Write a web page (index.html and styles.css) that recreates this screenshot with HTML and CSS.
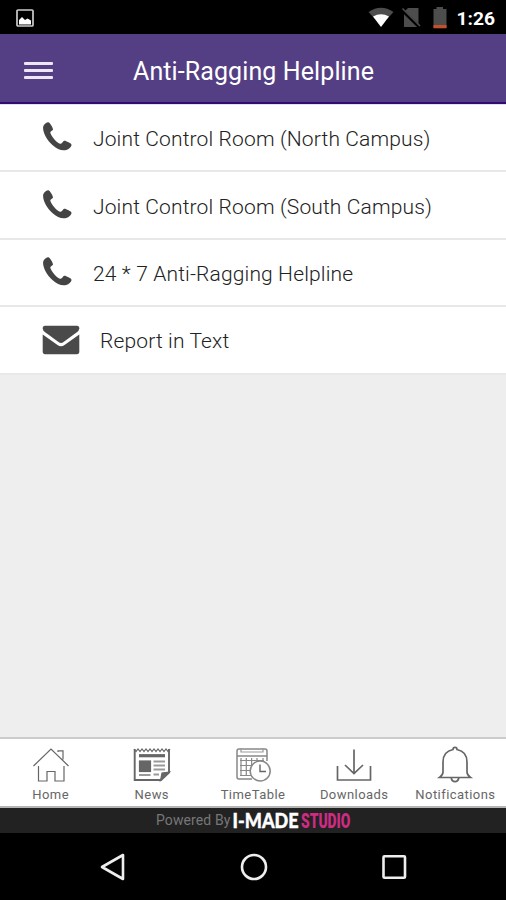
FILE: index.html
```
<!DOCTYPE html>
<html lang="en">
<head>
    <meta charset="UTF-8">
    <meta name="viewport" content="width=device-width, initial-scale=1.0">
    <title>Anti-Ragging Helpline</title>
    <link rel="stylesheet" href="styles.css">
</head>

<body>
    <svg class="sprite" width="0" height="0">
        <symbol id="phone" viewBox="0 0 30 30">
            <path d="M6.8 1.4C5.3.9 2 3 1.3 5.2C.1 10 4.1 18.500 10.400 24C15 28.200 20 30.100 24.200 29C27 28.200 29 26.400 29.500 24.300C29.700 23.200 28.500 22.300 26.500 21.300C24.500 20.300 23 19.500 22.100 19.800C21.100 20.200 20.300 22.200 19 22.700C17.500 23.200 14.800 21.200 12.500 18.500C10 15.500 7.900 12.300 8.400 11C8.800 10.100 10.700 9.700 11 8.500C11.300 7.100 8.100 1.900 6.800 1.400Z"/>
        </symbol>
    </svg>

    <div class="statusbar">
        <svg class="picture" width="18" height="18" viewBox="0 0 18 18">
            <rect x="1" y="1" width="16" height="16" rx="1" fill="none" stroke="#ccc" stroke-width="1.700"/>
            <path d="M3 15.500V11L6 8L9 11L11.500 9.500L15 11.500V15.500Z" fill="#fff"/>
        </svg>
        <div class="indicators">
            <svg width="138" height="34" viewBox="368 0 138 34">
                <path d="M368.500 12Q381 3.500 393.500 12L387.500 18.500H374.500Z" fill="#4d4d4d"/>
                <path d="M373 16.500Q381 12 389 16.500L381 27Z" fill="#fff"/>
                <path d="M408 8H418.500V27H404V12Z" fill="#4d4d4d"/>
                <path d="M402 10L420 27.500" stroke="#000" stroke-width="3.200"/>
                <path d="M402.500 8.500L420 26" stroke="#4d4d4d" stroke-width="1.600"/>
                <path d="M433.500 9H436.500V7H443V9H446.500V28H433.500Z" fill="#4d4d4d"/>
                <path d="M433.500 25H446.500V28.300H433.500Z" fill="#c44f2b"/>
                <text class="clock" x="456.500" y="25" textLength="38.500" lengthAdjust="spacingAndGlyphs">1:26</text>
            </svg>
        </div>
    </div>

    <div class="header">
        <div class="burger">
            <span></span>
            <span></span>
            <span></span>
        </div>
        <div class="title">Anti-Ragging Helpline</div>
    </div>

    <div class="list">
        <div class="row">
            <svg class="phone" width="30" height="30"><use href="#phone"/></svg>
            <span>Joint Control Room (North Campus)</span>
        </div>
        <div class="row">
            <svg class="phone" width="30" height="30"><use href="#phone"/></svg>
            <span>Joint Control Room (South Campus)</span>
        </div>
        <div class="row">
            <svg class="phone" width="30" height="30"><use href="#phone"/></svg>
            <span>24 * 7 Anti-Ragging Helpline</span>
        </div>
        <div class="row">
            <svg class="mail" width="38" height="30" viewBox="0 0 38 30">
                <path d="M3 .8H35Q37.300.8 37.300 3.500Q37.300 5.500 34.500 7.600L21.500 17Q19 18.800 16.500 17L3.500 7.600Q.7 5.500.7 3.500Q.7.8 3 .8Z"/>
                <path d="M.7 9.500L15.500 20Q19 22.500 22.500 20L37.300 9.500V26.500Q37.300 29.200 34.800 29.200H3.200Q.7 29.200.7 26.500Z"/>
            </svg>
            <span>Report in Text</span>
        </div>
    </div>

    <div class="tabs">
        <div class="tab">
            <svg width="40" height="40" viewBox="0 0 40 40">
                <path d="M2.500 22L20 5L37.500 22M27 8V6.800H32V15.500M7.500 22V37H16V27.500H24V37H33V22"/>
            </svg>
            <span>Home</span>
        </div>
        <div class="tab">
            <svg width="40" height="40" viewBox="0 0 40 40">
                <path d="M2.700 5V36H29L37 28.500V5" stroke-width="1.900"/>
                <path d="M2 5L4 7.500L6 5L8 7.500L10 5L12 7.500L14 5L16 7.500L18 5L20 7.500L22 5L24 7.500L26 5L28 7.500L30 5L32 7.500L34 5L36 7.500L38 5"/>
                <path d="M28.500 36.500L30 29L37.500 28Z" fill="#666"/>
                <path d="M7 11.700H33" stroke-width="3.200"/>
                <rect x="7.500" y="17" width="11" height="10.500" fill="#666"/>
                <path d="M21.500 17.500H33M21.500 21.500H33M21.500 25.500H33M21.500 30.500H27M7 31H18.500" stroke="#999" stroke-width="2.200"/>
            </svg>
            <span>News</span>
        </div>
        <div class="tab">
            <svg width="40" height="40" viewBox="0 0 40 40">
                <path d="M19 35H6Q4 35 4 33V7Q4 5 6 5H32Q34 5 34 7V17M4 12H34" stroke="#888" stroke-width="1.500"/>
                <path d="M8 4V8.500M30 4V8.500M8 8H30" stroke="#999"/>
                <path d="M7 16.500H31M7 21.500H20M7 26.500H18M7 31.500H18M8 14V32M13.300 14V32M18.600 14V22M24 14V18M30 14V17" stroke="#888"/>
                <circle cx="27.200" cy="27" r="10" fill="#fff" stroke="#888" stroke-width="1.500"/>
                <path d="M27 20.500V27.500H33" stroke-width="1.400"/>
            </svg>
            <span>TimeTable</span>
        </div>
        <div class="tab">
            <svg width="40" height="40" viewBox="0 0 40 40">
                <path d="M20 5.500V29M11 21L20 29.500L29 21M3.500 22V36H36.500V22" stroke-width="1.700"/>
            </svg>
            <span>Downloads</span>
        </div>
        <div class="tab">
            <svg width="40" height="40" viewBox="0 0 40 40">
                <path d="M18 5.500Q18 3.300 20 3.300Q22 3.300 22 5.500Q32 7.500 32 18V28Q32 31 35.500 33.500H4.500Q8 31 8 28V18Q8 7.500 18 5.500ZM16.200 34Q17 37.700 20 37.700Q23 37.700 23.800 34" stroke-width="1.700"/>
            </svg>
            <span>Notifications</span>
        </div>
    </div>

    <div class="powered">
        <span>Powered By</span>
        <svg width="120" height="25" viewBox="0 0 120 25">
            <text class="made" transform="translate(.5 20) scale(.86 1)">I-MADE</text>
            <text class="studio" transform="translate(69 20) scale(.66 1)">STUDIO</text>
        </svg>
    </div>

    <div class="navbar">
        <svg width="28" height="30" viewBox="0 0 28 30"><path d="M24 3V27L3 15Z"/></svg>
        <svg width="28" height="30" viewBox="0 0 28 30"><circle cx="14" cy="15" r="12"/></svg>
        <svg width="28" height="30" viewBox="0 0 28 30"><rect x="3.500" y="4.300" width="21.500" height="21.500" rx="1"/></svg>
    </div>
</body>
</html>
```
FILE: styles.css
```
body{
    display: flex;
    flex-direction: column;
    height: 900px;
    margin: 0;
    background-color: #eee;
    font-family: Roboto, sans-serif;
    overflow: hidden;
}
.sprite{
    display: none;
}
/*top bars*/
.statusbar{
    display: flex;
    justify-content: space-between;
    height: 34px;
    background-color: #000;
}
.picture{
    margin: 9px 0 0 16px;
}
.clock{
    font-size: 19px;
    font-weight: 700;
    fill: #fff;
}
.header{
    display: flex;
    align-items: center;
    box-sizing: border-box;
    height: 70px;
    padding: 4px 0 0 24px;
    background-color: #553f84;
    border-bottom: 2px solid #320b70;
}
.burger{
    display: flex;
    flex-direction: column;
    gap: 4px;
    width: 29px;
    margin-right: 80px;
}
.burger span{
    height: 3px;
    border-radius: 1px;
    background-color: #eee6f5;
}
.title{
    padding-top: 4px;
    color: #fff;
    font-size: 25px;
    line-height: 30px;
    letter-spacing: 0.1px;
    white-space: nowrap;
}
/*contact list*/
.list{
    border-top: 1px solid #e6e0ee;
}
.row{
    display: flex;
    align-items: center;
    box-sizing: border-box;
    height: 67.4px;
    padding: 2px 0 0 42px;
    background-color: #fff;
    border-bottom: 2px solid #e8e8e8;
    color: #222;
    font-size: 21px;
    font-weight: 300;
    letter-spacing: 0.14px;
    white-space: nowrap;
}
.row span{
    padding-top: 1px;
}
.phone{
    margin: -5px 21px 0 0;
    fill: #444;
}
.mail{
    margin: -2px 20px 0 0;
    fill: #4a4a4a;
}
/*bottom tabs*/
.tabs{
    display: flex;
    box-sizing: border-box;
    height: 71px;
    margin-top: auto;
    background-color: #fff;
    border-top: 2px solid #ccc;
    border-bottom: 2px solid #b5b5b5;
}
.tab{
    display: flex;
    flex: 1;
    flex-direction: column;
    align-items: center;
    gap: 2px;
    padding-top: 5px;
    color: #666;
    font-size: 13px;
    line-height: 18px;
    letter-spacing: 0.45px;
}
.tab svg{
    fill: none;
    stroke: #666;
    stroke-width: 1.2;
}
.powered{
    display: flex;
    height: 25px;
    padding-left: 156px;
    background-color: #222;
    color: #777;
    font-size: 14px;
    line-height: 25px;
    letter-spacing: 0.1px;
    white-space: nowrap;
}
.powered span{
    width: 76px;
}
.made{
    fill: #fff;
    stroke: #fff;
    stroke-width: 0.4;
    font-family: Lato, sans-serif;
    font-size: 21px;
    font-weight: 900;
    letter-spacing: 0;
}
.studio{
    fill: #cf2b83;
    font-size: 21px;
    font-weight: 900;
    letter-spacing: 0;
}
/*system buttons*/
.navbar{
    display: flex;
    justify-content: space-between;
    align-items: center;
    box-sizing: border-box;
    height: 67px;
    padding: 0 98px 0 99px;
    background-color: #000;
}
.navbar svg{
    fill: none;
    stroke: #eee;
    stroke-width: 2.6;
    stroke-linejoin: round;
}
```
